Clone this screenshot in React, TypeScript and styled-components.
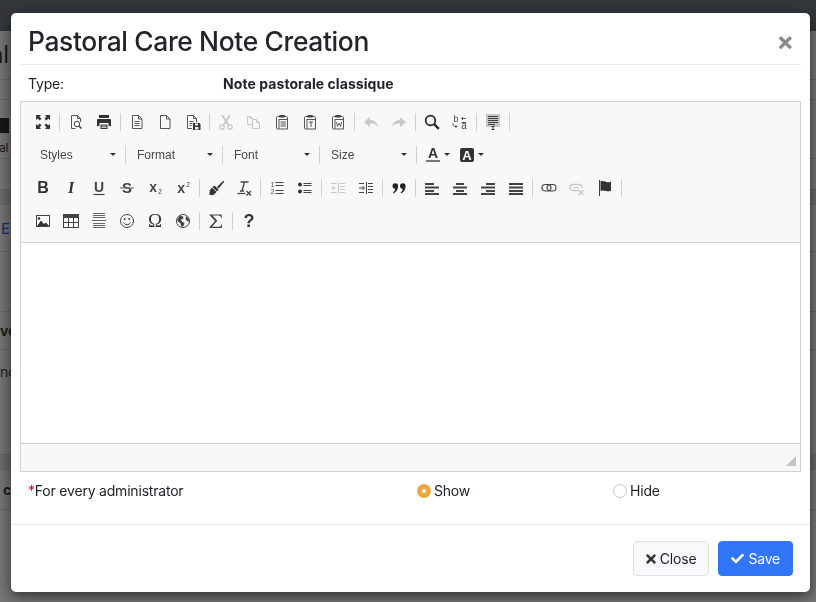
import { Fragment, ReactNode } from "react";
import styled, { createGlobalStyle } from "styled-components";
import { FaCheck, FaTimes } from "react-icons/fa";

const GlobalStyle = createGlobalStyle`
  html, body {
    margin: 0;
    padding: 0;
    height: 100%;
    overflow: hidden;
    background: #757575;
    font-family: Inter, "Liberation Sans", sans-serif;
    font-size: 14px;
    letter-spacing: -0.2px;
    color: #212529;
  }
`;

// page behind the dialog, only its edges are visible
const BehindPage = styled.div`
  position: fixed;
  inset: 0;
  display: flex;
  flex-direction: column;
`;
const BehindBar = styled.div`
  height: 31px;
  background: #33373b;
`;
const BehindRow = styled.div<{ $h: number; $band?: boolean; $top?: number }>`
  height: ${(p) => p.$h}px;
  box-sizing: border-box;
  border-bottom: 1px solid #636363;
  background: ${(p) => (p.$band ? "#6a6a6a" : "#747474")};
  display: flex;
  align-items: ${(p) => (p.$top ? "flex-start" : "center")};
  padding-top: ${(p) => p.$top || 0}px;
  overflow: hidden;
`;
const BehindText = styled.span<{ $size: number; $color?: string; $bold?: boolean; $shift?: number }>`
  font-size: ${(p) => p.$size}px;
  font-weight: ${(p) => (p.$bold ? 700 : 400)};
  color: ${(p) => p.$color || "#1c1c1c"};
  margin-left: ${(p) => p.$shift || 0}px;
  line-height: 1;
`;
const BehindBlock = styled.div`
  width: 9px;
  height: 15px;
  background: #161616;
`;
const BehindStack = styled.div`
  display: flex;
  flex-direction: column;
  gap: 9px;
`;

const Overlay = styled.div`
  position: relative;
  padding: 13px 0 0 11px;
`;
const Modal = styled.div`
  width: 799px;
  height: 579px;
  background: #fff;
  border-radius: 5px;
  box-shadow: 0 4px 14px rgba(0, 0, 0, 0.6);
  display: flex;
  flex-direction: column;
`;
const Header = styled.div`
  height: 52px;
  margin: 0 9px;
  padding: 6px 7px 0 8px;
  box-sizing: border-box;
  border-bottom: 1px solid #e9ecef;
  display: flex;
  align-items: center;
  justify-content: space-between;
`;
const Title = styled.h4`
  margin: 0;
  font-size: 26.4px;
  font-weight: 500;
  line-height: 1.2;
  letter-spacing: -0.35px;
  color: #212529;
`;
const CloseX = styled.span`
  font-size: 26px;
  font-weight: 700;
  line-height: 1;
  color: #8a8a8a;
`;
const Body = styled.div`
  flex: 1;
  padding: 0 9px;
  display: flex;
  flex-direction: column;
`;
const TypeRow = styled.div`
  height: 36px;
  padding: 0 8px;
  box-sizing: border-box;
  display: grid;
  grid-template-columns: 195px 1fr;
  align-items: center;
`;
const Strong = styled.span`
  font-weight: 700;
  letter-spacing: 0.07px;
`;
const Editor = styled.div`
  border: 1px solid #d1d1d1;
  width: 781px;
  box-sizing: border-box;
  height: 371px;
  display: flex;
  flex-direction: column;
`;
const Toolbar = styled.div`
  height: 141px;
  box-sizing: border-box;
  background: #f8f8f8;
  border-bottom: 1px solid #d1d1d1;
  padding: 3px 0 0 8px;
  display: flex;
  flex-direction: column;
`;
const ToolRow = styled.div`
  height: 33px;
  display: flex;
  align-items: center;
`;
const Tool = styled.div`
  width: 28px;
  height: 20px;
  display: flex;
  align-items: center;
  justify-content: center;
  flex: none;
`;
const ToolLetter = styled.span<{ $size: number; $italic?: boolean; $serif?: boolean; $weight?: number }>`
  font-family: ${(p) => (p.$serif ? '"Liberation Serif", serif' : '"Liberation Sans", sans-serif')};
  font-size: ${(p) => p.$size}px;
  font-weight: ${(p) => p.$weight ?? 700};
  font-style: ${(p) => (p.$italic ? "italic" : "normal")};
  letter-spacing: 0;
  line-height: 20px;
  color: #333;
`;
const Sep = styled.div`
  width: 1px;
  height: 18px;
  margin: 0 2px;
  flex: none;
  background: #d1d1d1;
`;
const Combo = styled.div`
  width: 96px;
  height: 20px;
  box-sizing: border-box;
  padding: 0 9px 0 11px;
  flex: none;
  display: flex;
  align-items: center;
  justify-content: space-between;
  font-family: "Liberation Sans", Arial, sans-serif;
  font-size: 12px;
  letter-spacing: 0;
  color: #484848;
`;
const Caret = styled.span`
  width: 0;
  height: 0;
  flex: none;
  border-left: 3px solid transparent;
  border-right: 3px solid transparent;
  border-top: 3px solid #2f2f2f;
`;
const ComboSep = styled(Sep)`
  margin: 0;
`;
const ColorTool = styled.div`
  width: 34px;
  height: 20px;
  padding-left: 9px;
  box-sizing: border-box;
  display: flex;
  align-items: center;
  gap: 4px;
  flex: none;
`;
const TextColor = styled.span`
  width: 14px;
  height: 15px;
  box-sizing: border-box;
  border-bottom: 2px solid #777;
  font-family: "Liberation Sans", sans-serif;
  font-size: 14px;
  font-weight: 700;
  letter-spacing: 0;
  line-height: 13px;
  text-align: center;
  color: #333;
`;
const BackColor = styled(TextColor)`
  border: none;
  height: 14px;
  border-radius: 2px;
  background: #333;
  color: #fff;
  font-size: 13px;
  line-height: 15px;
`;
const Content = styled.div`
  flex: 1;
  background: #fff;
`;
const BottomBar = styled.div`
  height: 28px;
  background: #f8f8f8;
  border-top: 1px solid #d1d1d1;
  display: flex;
  align-items: flex-end;
  justify-content: flex-end;
  padding: 0 4px 5px 0;
  box-sizing: border-box;
`;
const Resizer = styled.div`
  width: 0;
  height: 0;
  border-left: 10px solid transparent;
  border-bottom: 10px solid #c4c4c4;
`;
const FieldRow = styled.div`
  height: 51px;
  padding: 0 7px 15px 8px;
  box-sizing: border-box;
  display: grid;
  grid-template-columns: 389px 196px 1fr;
  align-items: center;
`;
const Star = styled.span`
  color: #f00;
`;
const RadioLabel = styled.label`
  display: flex;
  align-items: center;
  gap: 3px;
`;
const RadioMark = styled.span<{ $checked?: boolean }>`
  width: 14px;
  height: 14px;
  margin-top: 1px;
  box-sizing: border-box;
  border-radius: 50%;
  background: ${(p) => (p.$checked ? "#e9a83f" : "#fff")};
  border: ${(p) => (p.$checked ? "none" : "1px solid #c8c8c8")};
  display: flex;
  align-items: center;
  justify-content: center;
  &::after {
    content: "";
    width: 4px;
    height: 4px;
    border-radius: 50%;
    background: ${(p) => (p.$checked ? "#fff" : "transparent")};
  }
`;
const Footer = styled.div`
  height: 68px;
  margin: 0 0 0 1px;
  box-sizing: border-box;
  border-top: 1px solid #e9ecef;
  padding: 0 17px 0 0;
  display: flex;
  align-items: center;
  justify-content: flex-end;
  gap: 9px;
`;
const Button = styled.button<{ $primary?: boolean }>`
  height: 35px;
  box-sizing: border-box;
  border-radius: 4px;
  padding: 0 12px;
  font: inherit;
  font-size: 14px;
  display: flex;
  align-items: center;
  gap: 4px;
  letter-spacing: -0.2px;
  color: ${(p) => (p.$primary ? "#fff" : "#212529")};
  background: ${(p) => (p.$primary ? "#3176f6" : "#f8f9fa")};
  border: 1px solid ${(p) => (p.$primary ? "#3176f6" : "#dfe3e6")};
`;
const CloseIcon = styled(FaTimes)`
  margin: 0 -2px;
  color: #333;
`;

const DARK = "#444";
const OFF = "#c8c8c8";

const Svg = ({ children }: { children: ReactNode }) => (
  <svg width="16" height="16" viewBox="0 0 16 16" fill="none" overflow="visible">
    {children}
  </svg>
);

const doc = (c: string) => (
  <path d="M3.5 1.5h6l3.5 3.5v9.5h-9.5zM9.5 1.5v3.5h3.5" stroke={c} strokeWidth=".9" />
);
const clip = (
  <>
    <path d="M5 2.500H3.500c-.6 0-1 .4-1 1v10.500c0 .6.4 1 1 1h1" stroke={DARK} strokeWidth=".9" />
    <path d="M11 2.500h1.500c.6 0 1 .4 1 1V5" stroke={DARK} strokeWidth=".9" />
    <rect x="5" y="1" width="6" height="2.500" rx="1" fill={DARK} />
    <rect x="5" y="5.500" width="8.500" height="9.500" stroke={DARK} strokeWidth=".9" />
  </>
);
const small = (t: string, size: number, x: number, y: number, w = 400) => (
  <text
    x={x}
    y={y}
    textAnchor="middle"
    fontSize={size}
    fontWeight={w}
    fontFamily="Liberation Sans, sans-serif"
    fill={DARK}
  >
    {t}
  </text>
);

const letters: Record<string, ReactNode> = {
  bold: <ToolLetter $size={16}>B</ToolLetter>,
  italic: (
    <ToolLetter $size={16} $italic $serif>
      I
    </ToolLetter>
  ),
  omega: (
    <ToolLetter $size={19} $serif $weight={400}>
      Ω
    </ToolLetter>
  ),
  help: <ToolLetter $size={18}>?</ToolLetter>,
};

const icons: Record<string, ReactNode> = {
  maximize: (
    <path
      d="M1 1h5L4.500 2.700 6.500 4.700 4.700 6.500 2.700 4.500 1 6zM15 1v5l-1.700-1.500-2 2-1.800-1.800 2-2L10 1zM1 15v-5l1.700 1.500 2-2 1.800 1.800-2 2L6 15zM15 15h-5l1.500-1.700-2-2 1.800-1.800 2 2L15 10z"
      fill="#333"
    />
  ),
  preview: (
    <>
      <path d="M7.500 14.500H3.500v-13h6l3 3V8M9.500 1.500v3h3" stroke={DARK} strokeWidth=".9" />
      <circle cx="9" cy="10" r="2.700" stroke={DARK} />
      <path d="M11 12l2.500 2.500" stroke={DARK} strokeWidth="1.500" />
    </>
  ),
  print: (
    <>
      <rect x="3" y="1" width="10" height="3" fill="#333" />
      <path d="M1 6c0-.6.4-1 1-1h12c.6 0 1 .4 1 1v6h-2.500V9h-9v3H1z" fill="#333" />
      <path d="M4.500 10.500h7v4.500h-7z" fill="#333" />
      <path d="M5.500 12h5M5.500 13.500h5" stroke="#f8f8f8" strokeWidth=".8" />
    </>
  ),
  newpage: (
    <>
      {doc(DARK)}
      <path d="M5.500 7.500h5M5.500 9.500h5M5.500 11.500h5" stroke={DARK} strokeWidth=".9" />
    </>
  ),
  blank: doc(DARK),
  save: (
    <>
      <path d="M7 14.500H2.500v-13h6l3 3V8M8.500 1.500v3h3" stroke={DARK} strokeWidth=".9" />
      <path d="M4.500 7.500h4M4.500 9.500h3M4.500 11.500h2" stroke={DARK} strokeWidth=".9" />
      <path d="M8 9h6.500l1 1v6H8z" fill="#333" />
      <path d="M10 9.500h3v2h-3zM10 13h3.500v2.500H10z" fill="#f8f8f8" />
    </>
  ),
  cut: (
    <>
      <path d="M4 1l6.500 10M12 1L5.500 11" stroke={OFF} strokeWidth="1.800" />
      <circle cx="4" cy="13" r="2.200" stroke={OFF} strokeWidth="1.300" />
      <circle cx="12" cy="13" r="2.200" stroke={OFF} strokeWidth="1.300" />
    </>
  ),
  copy: (
    <>
      <path d="M6 10.500H1.500v-8h3l2 2M4.500 2.500v2h2" stroke={OFF} />
      <path d="M6.500 5.500h4l3 3v6h-7zM10.500 5.500v3h3" stroke={OFF} />
    </>
  ),
  paste: (
    <>
      {clip}
      <path d="M6.500 8h5.500M6.500 10h5.500M6.500 12h5.500" stroke={DARK} strokeWidth=".9" />
    </>
  ),
  pastetext: (
    <>
      {clip}
      <path d="M7 8h4M9 8v5" stroke={DARK} strokeWidth=".9" />
    </>
  ),
  pasteword: (
    <>
      {clip}
      <path d="M6.500 8l1 4.500L9.200 9l1.400 3.500 1-4.500" stroke={DARK} strokeWidth=".8" />
    </>
  ),
  undo: <path d="M1 8l6-5v3c4 0 7 2 8 7-2-3-4-3.500-8-3.500V13z" fill={OFF} />,
  redo: <path d="M15 8L9 3v3C5 6 2 8 1 13c2-3 4-3.500 8-3.500V13z" fill={OFF} />,
  find: (
    <>
      <circle cx="6.500" cy="6.500" r="4.800" stroke="#222" strokeWidth="1.700" />
      <path d="M10 10l4.800 4.800" stroke="#222" strokeWidth="2.400" />
    </>
  ),
  replace: (
    <>
      {small("b", 9, 4, 7.500)}
      {small("a", 10, 12, 15)}
      <path d="M14 4.500H9.500M11 3L9.500 4.500 11 6M1 9v1.500c0 1.500 1 2 3.500 2M3.500 11l1.500 1.500L3.500 14" stroke={DARK} strokeWidth=".9" />
      <path d="M9.500 8.500h5" stroke={DARK} strokeWidth=".9" />
    </>
  ),
  selectall: (
    <>
      <rect x="1" y="0" width="14" height="13" fill="#c6c6c6" />
      <path d="M3 2.500h10M3 4.500h10M3 6.500h10M3 8.500h10M3 10.500h7" stroke="#444" />
      <path d="M6.500 12.500h3M8 12.500v3M6.500 15.500h3" stroke="#222" strokeWidth=".9" />
    </>
  ),
  underline: (
    <>
      {small("U", 14, 8, 12, 700)}
      <path d="M2.500 14.500h11" stroke={DARK} strokeWidth="1.200" />
    </>
  ),
  strike: (
    <>
      {small("S", 15, 8, 13, 700)}
      <path d="M1 8h14" stroke="#777" strokeWidth="1.200" />
    </>
  ),
  sub: (
    <>
      {small("x", 14, 6, 12, 700)}
      {small("2", 6.500, 13, 14)}
    </>
  ),
  sup: (
    <>
      {small("x", 14, 6, 13, 700)}
      {small("2", 6.500, 13, 7)}
    </>
  ),
  brush: (
    <>
      <path d="M15.500.5L9 7l1.500 1.500L16 2z" fill="#333" />
      <path d="M6.500 5.500l4 4-1.500 2L4.500 7z" fill="#333" />
      <path d="M4 7.500l4.500 4.500c-1 1.500-3 3-5 3.500l-.5-1-1 .6-1-.8 1-1.500-1-.5 1.500-1.500-1.500.3C1.500 10.500 3 9 4 7.500z" fill="#333" />
    </>
  ),
  removeformat: (
    <>
      <path d="M4.500 2h8M8.500 2L6 11M4 11h4" stroke={DARK} strokeWidth="1.300" />
      <path d="M1.500 13.500h8" stroke={DARK} strokeWidth="1.200" />
      <path d="M10.500 11l4.500 4.500M15 11l-4.500 4.500" stroke={DARK} strokeWidth="1.300" />
    </>
  ),
  ol: (
    <>
      <path d="M6.500 2.500h8M6.500 5.500h8M6.500 10.500h8M6.500 13.500h8" stroke={DARK} />
      {small("1", 6.500, 3.500, 6.500)}
      {small("2", 6.500, 3.500, 14)}
    </>
  ),
  ul: (
    <>
      <circle cx="3" cy="4.500" r="2" fill="#333" />
      <circle cx="3" cy="11.500" r="2" fill="#333" />
      <path d="M6.500 3.500h8M6.500 5.500h8M6.500 10.500h8M6.500 12.500h8" stroke={DARK} />
    </>
  ),
  outdent: (
    <path d="M8.500 2v12M10 3.500h5M10 6.500h5M10 9.500h5M10 12.500h5M1 3.500h6M1 12.500h6M2 8h4M4 6L2 8l2 2" stroke={OFF} />
  ),
  indent: (
    <path d="M8.500 2v12M10 3.500h5M10 6.500h5M10 9.500h5M10 12.500h5M1 3.500h5M1 12.500h5M1 8h5M4.500 6l2 2-2 2" stroke={DARK} />
  ),
  quote: (
    <>
      <path d="M1.500 6a2.800 2.800 0 1 1 5.600 0c0 3-1.500 6-4.500 7.500L2 12.700c1.200-.9 2-2 2.200-3.900A2.800 2.800 0 0 1 1.500 6z" fill="#222" />
      <path d="M9 6a2.800 2.800 0 1 1 5.600 0c0 3-1.500 6-4.500 7.500l-.6-.8c1.200-.9 2-2 2.200-3.900A2.800 2.800 0 0 1 9 6z" fill="#222" />
    </>
  ),
  left: <path d="M1 3h9v2H1zM1 6.500h14v2H1zM1 10h9v2H1zM1 13h14v2H1z" fill={DARK} />,
  center: <path d="M4 3h8v2H4zM1 6.500h14v2H1zM4 10h8v2H4zM1 13h14v2H1z" fill={DARK} />,
  right: <path d="M6 3h9v2H6zM1 6.500h14v2H1zM6 10h9v2H6zM1 13h14v2H1z" fill={DARK} />,
  justify: <path d="M1 3h14v2H1zM1 6.500h14v2H1zM1 10h14v2H1zM1 13h14v2H1z" fill={DARK} />,
  link: (
    <>
      <rect x="1" y="4.500" width="9" height="6.500" rx="3.200" stroke={DARK} strokeWidth="1.200" />
      <rect x="6" y="4.500" width="9" height="6.500" rx="3.200" stroke={DARK} strokeWidth="1.200" />
    </>
  ),
  unlink: (
    <>
      <path d="M9 10.500H4a3 3 0 0 1 0-6h6a3 3 0 0 1 3 3" stroke={OFF} strokeWidth="1.300" />
      <path d="M4 7.500h6" stroke={OFF} />
      <path d="M9.500 10l5 5M14.500 10l-5 5" stroke={OFF} strokeWidth="1.500" />
    </>
  ),
  anchor: (
    <>
      <path d="M2.500 0v16" stroke={DARK} />
      <path d="M3.500 1.500c2-1 4 0 6 .5s4 0 4.500-.5v9c-1 1-3 1-5 .5s-4-1-5.500 0z" fill="#333" />
    </>
  ),
  image: (
    <>
      <rect x="1.500" y="2.500" width="13" height="11" fill="#fff" stroke={DARK} />
      <path d="M2 13L6 7.500l3 3.500 2-1.500 3 3.500z" fill="#333" />
      <circle cx="4" cy="5.500" r="1.300" fill="#333" />
    </>
  ),
  table: (
    <>
      <rect x=".5" y="1.500" width="15" height="13" fill="#fff" stroke={DARK} />
      <path d="M.5 1.500h15v3.500H.5z" fill={DARK} />
      <path d="M.5 9.500h15M5.500 5v9.500M10.500 5v9.500" stroke={DARK} />
    </>
  ),
  hr: <path d="M2 .5h12M2 2.500h12M2 4.500h12M1 7.500h14M2 10.500h12M2 12.500h12M2 14.500h12" stroke="#666" />,
  smiley: (
    <>
      <circle cx="8" cy="8" r="6.500" stroke={DARK} />
      <circle cx="5.700" cy="6" r="1" fill={DARK} />
      <circle cx="10.300" cy="6" r="1" fill={DARK} />
      <path d="M4.500 9.500c1.500 3 5.500 3 7 0" stroke={DARK} />
    </>
  ),
  globe: (
    <>
      <circle cx="8" cy="8" r="6.500" stroke={DARK} />
      <path d="M5 2.500l3 1 .5 2-2.500 1 1 2.500 2.500.5-1 3.500-2 1-1-3.500-3-2.500V6z" fill={DARK} />
      <path d="M11 3l2.500 2.500.8 3-2.300-.5-1.500-2z" fill={DARK} />
    </>
  ),
  sigma: (
    <path
      d="M1.500 1.500h12l.5 3.500h-.6c-.5-1.500-1.500-2.500-3-2.500H4.500l4.800 5.300-5.300 6h6.500c1.500 0 2.500-.8 3-2.300h.6L13.800 15H1.500v-.7L7 8 1.500 2z"
      fill={DARK}
    />
  ),
};

const Glyph = ({ name }: { name: string }) => (
  <Tool>{letters[name] ?? <Svg>{icons[name]}</Svg>}</Tool>
);

const renderTools = (list: string) =>
  list
    .split(" ")
    .map((name, i) => (name === "|" ? <Sep key={i} /> : <Glyph key={i} name={name} />));

const combos = ["Styles", "Format", "Font", "Size"];

export default function App() {
  return (
    <>
      <GlobalStyle />
      <BehindPage>
        <BehindBar />
        <BehindRow $h={49}>
          <BehindText $size={24} $shift={-10}>
            al
          </BehindText>
        </BehindRow>
        <BehindRow $h={20} />
        <BehindRow $h={59} $top={18}>
          <BehindStack>
            <BehindBlock />
            <BehindText $size={12} $shift={-1}>
              al
            </BehindText>
          </BehindStack>
        </BehindRow>
        <BehindRow $h={31} />
        <BehindRow $h={15} $band />
        <BehindRow $h={47}>
          <BehindText $size={15} $color="#0d2f6e" $shift={1}>
            E
          </BehindText>
        </BehindRow>
        <BehindRow $h={60} />
        <BehindRow $h={38}>
          <BehindText $size={14} $bold>
            ve
          </BehindText>
        </BehindRow>
        <BehindRow $h={105} $top={15}>
          <BehindText $size={14}>nc</BehindText>
        </BehindRow>
        <BehindRow $h={15} $band />
        <BehindRow $h={40}>
          <BehindText $size={14} $bold $shift={3}>
            c
          </BehindText>
        </BehindRow>
      </BehindPage>

      <Overlay>
        <Modal>
          <Header>
            <Title>Pastoral Care Note Creation</Title>
            <CloseX>×</CloseX>
          </Header>
          <Body>
            <TypeRow>
              <span>Type:</span>
              <Strong>Note pastorale classique</Strong>
            </TypeRow>
            <Editor>
              <Toolbar>
                <ToolRow>
                  {renderTools(
                    "maximize | preview print | newpage blank save | cut copy paste pastetext pasteword | undo redo | find replace | selectall |"
                  )}
                </ToolRow>
                <ToolRow>
                  {combos.map((label) => (
                    <Fragment key={label}>
                      <Combo>
                        {label}
                        <Caret />
                      </Combo>
                      <ComboSep />
                    </Fragment>
                  ))}
                  <ColorTool>
                    <TextColor>A</TextColor>
                    <Caret />
                  </ColorTool>
                  <ColorTool>
                    <BackColor>A</BackColor>
                    <Caret />
                  </ColorTool>
                </ToolRow>
                <ToolRow>
                  {renderTools(
                    "bold italic underline strike sub sup | brush removeformat | ol ul | outdent indent | quote | left center right justify | link unlink anchor |"
                  )}
                </ToolRow>
                <ToolRow>{renderTools("image table hr smiley omega globe | sigma | help")}</ToolRow>
              </Toolbar>
              <Content />
              <BottomBar>
                <Resizer />
              </BottomBar>
            </Editor>
            <FieldRow>
              <span>
                <Star>*</Star>For every administrator
              </span>
              <RadioLabel>
                <RadioMark $checked />
                Show
              </RadioLabel>
              <RadioLabel>
                <RadioMark />
                Hide
              </RadioLabel>
            </FieldRow>
          </Body>
          <Footer>
            <Button>
              <CloseIcon size={14} />
              Close
            </Button>
            <Button $primary>
              <FaCheck size={13} />
              Save
            </Button>
          </Footer>
        </Modal>
      </Overlay>
    </>
  );
}
